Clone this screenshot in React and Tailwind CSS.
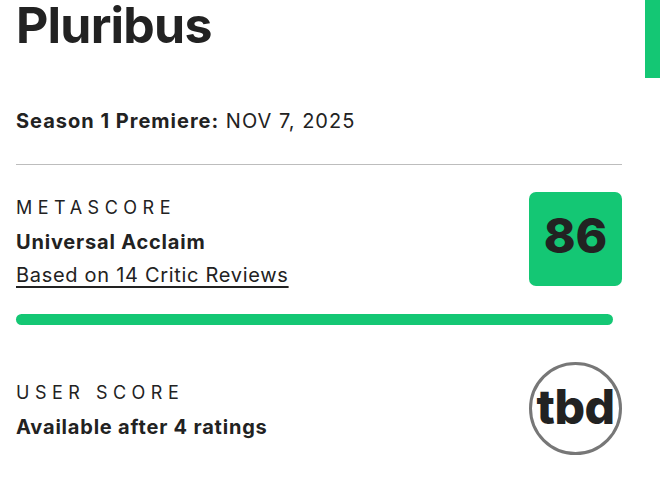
import React from "react";

export default function App() {
  return (
    <div className="relative w-[660px] h-[484px] overflow-hidden bg-white text-[#222] font-['Inter',sans-serif]">
      {/* side accent */}
      <div className="absolute right-0 top-0 w-[15px] h-[78px] bg-[#14c774]" />

      <div className="pl-4 w-[622px]">
        <h1 className="text-[50px] font-bold leading-[50px] tracking-[-0.8px]">
          Pluribus
        </h1>

        <p className="mt-[59px] text-[20px] leading-[24px] tracking-[1px]">
          <span className="font-bold">Season 1 Premiere:</span> NOV 7, 2025
        </p>

        <hr className="mt-[31px] border-t border-[#bdbdbd]" />

        {/* METASCORE */}
        <div className="mt-[27px] flex justify-between items-start">
          <div className="pt-[4px]">
            <p className="text-[18px] leading-[24px] tracking-[5.5px]">
              METASCORE
            </p>
            <p className="mt-[10px] text-[20px] leading-[24px] font-bold tracking-[0.8px]">
              Universal Acclaim
            </p>
            <p className="mt-[9px] text-[20px] leading-[24px] tracking-[0.7px] underline underline-offset-[4px] decoration-[1.5px]">
              Based on 14 Critic Reviews
            </p>
          </div>
          <div className="w-[93px] h-[94px] rounded-[7px] bg-[#14c774] flex items-center justify-center">
            <span className="text-[48px] font-extrabold leading-none text-[#222] -mt-[6px]">86</span>
          </div>
        </div>

        <div className="mt-[27px] w-[597px] h-[11px] rounded-full bg-[#14c774]" />

        {/* USER SCORE */}
        <div className="mt-[37px] flex justify-between items-start">
          <div className="pt-[19px]">
            <p className="text-[18px] leading-[24px] tracking-[5.5px]">
              USER SCORE
            </p>
            <p className="mt-[10px] text-[20px] leading-[24px] font-bold tracking-[0.8px]">
              Available after 4 ratings
            </p>
          </div>
          <div className="w-[93px] h-[93px] rounded-full border-[3px] border-[#777] flex items-center justify-center">
            <span className="text-[48px] font-extrabold leading-none text-[#222] -mt-[4px] tracking-[-0.5px]">tbd</span>
          </div>
        </div>
      </div>
    </div>
  );
}
